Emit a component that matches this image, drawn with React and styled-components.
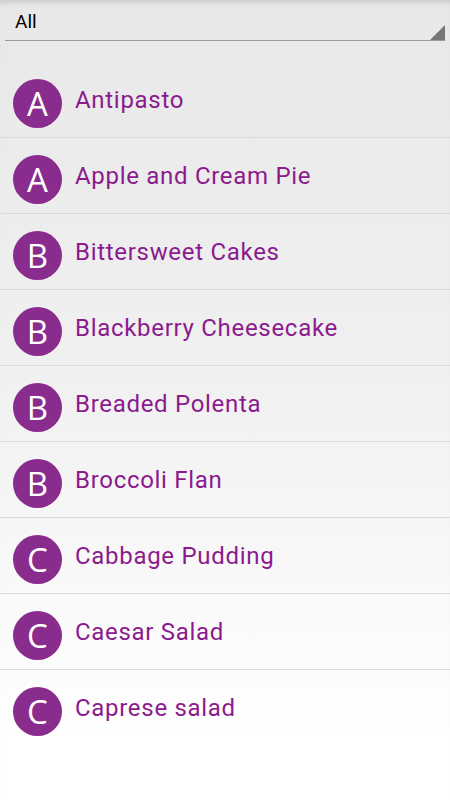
import React from "react";
import styled, { createGlobalStyle } from "styled-components";

const Global = createGlobalStyle`
  html, body { margin: 0; padding: 0; }
  body {
    width: 450px;
    height: 800px;
    overflow: hidden;
    font-family: Roboto, "Noto Sans", sans-serif;
  }
`;

const Screen = styled.div`
  position: relative;
  width: 450px;
  height: 800px;
  background: linear-gradient(to bottom, #e8e8e8 0%, #f0f0f0 45%, #ffffff 92%, #ffffff 100%);
  display: flex;
  flex-direction: column;
  box-shadow: inset 0 6px 5px -3px rgba(0, 0, 0, 0.12);
`;

const Spinner = styled.div`
  position: relative;
  margin: 0 5px;
  height: 41px;
  border-bottom: 1px solid #9a9a9a;
  display: flex;
  align-items: flex-end;
  padding: 0 10px 7px;
  box-sizing: border-box;
  font-size: 19px;
  color: #000;
`;

const Corner = styled.div`
  position: absolute;
  right: 0;
  bottom: 0;
  width: 0;
  height: 0;
  border-left: 15px solid transparent;
  border-bottom: 15px solid #777;
`;

const List = styled.div`
  margin-top: 21px;
  display: flex;
  flex-direction: column;
`;

const Row = styled.div`
  height: 76px;
  display: flex;
  align-items: center;
  padding-left: 13px;
  box-sizing: border-box;
  border-bottom: ${(p) => (p.$last ? "none" : "1px solid #dadada")};
`;

const Avatar = styled.div`
  width: 49px;
  height: 49px;
  margin-top: 7px;
  border-radius: 50%;
  background: #8a2c8d;
  color: #fff;
  display: flex;
  align-items: center;
  justify-content: center;
  font-family: "Open Sans", "Noto Sans", sans-serif;
  font-size: 33px;
  line-height: 1;
  flex-shrink: 0;
`;

const Label = styled.div`
  margin-left: 13px;
  font-size: 24px;
  letter-spacing: 0.7px;
  color: #8b1a8e;
`;

const items = [
  "Antipasto",
  "Apple and Cream Pie",
  "Bittersweet Cakes",
  "Blackberry Cheesecake",
  "Breaded Polenta",
  "Broccoli Flan",
  "Cabbage Pudding",
  "Caesar Salad",
  "Caprese salad",
];

export default function App() {
  return (
    <>
      <Global />
      <Screen>
        <Spinner>
          All
          <Corner />
        </Spinner>
        <List>
          {items.map((name, i) => (
            <Row key={name} $last={i === items.length - 1}>
              <Avatar>{name[0]}</Avatar>
              <Label>{name}</Label>
            </Row>
          ))}
        </List>
      </Screen>
    </>
  );
}
